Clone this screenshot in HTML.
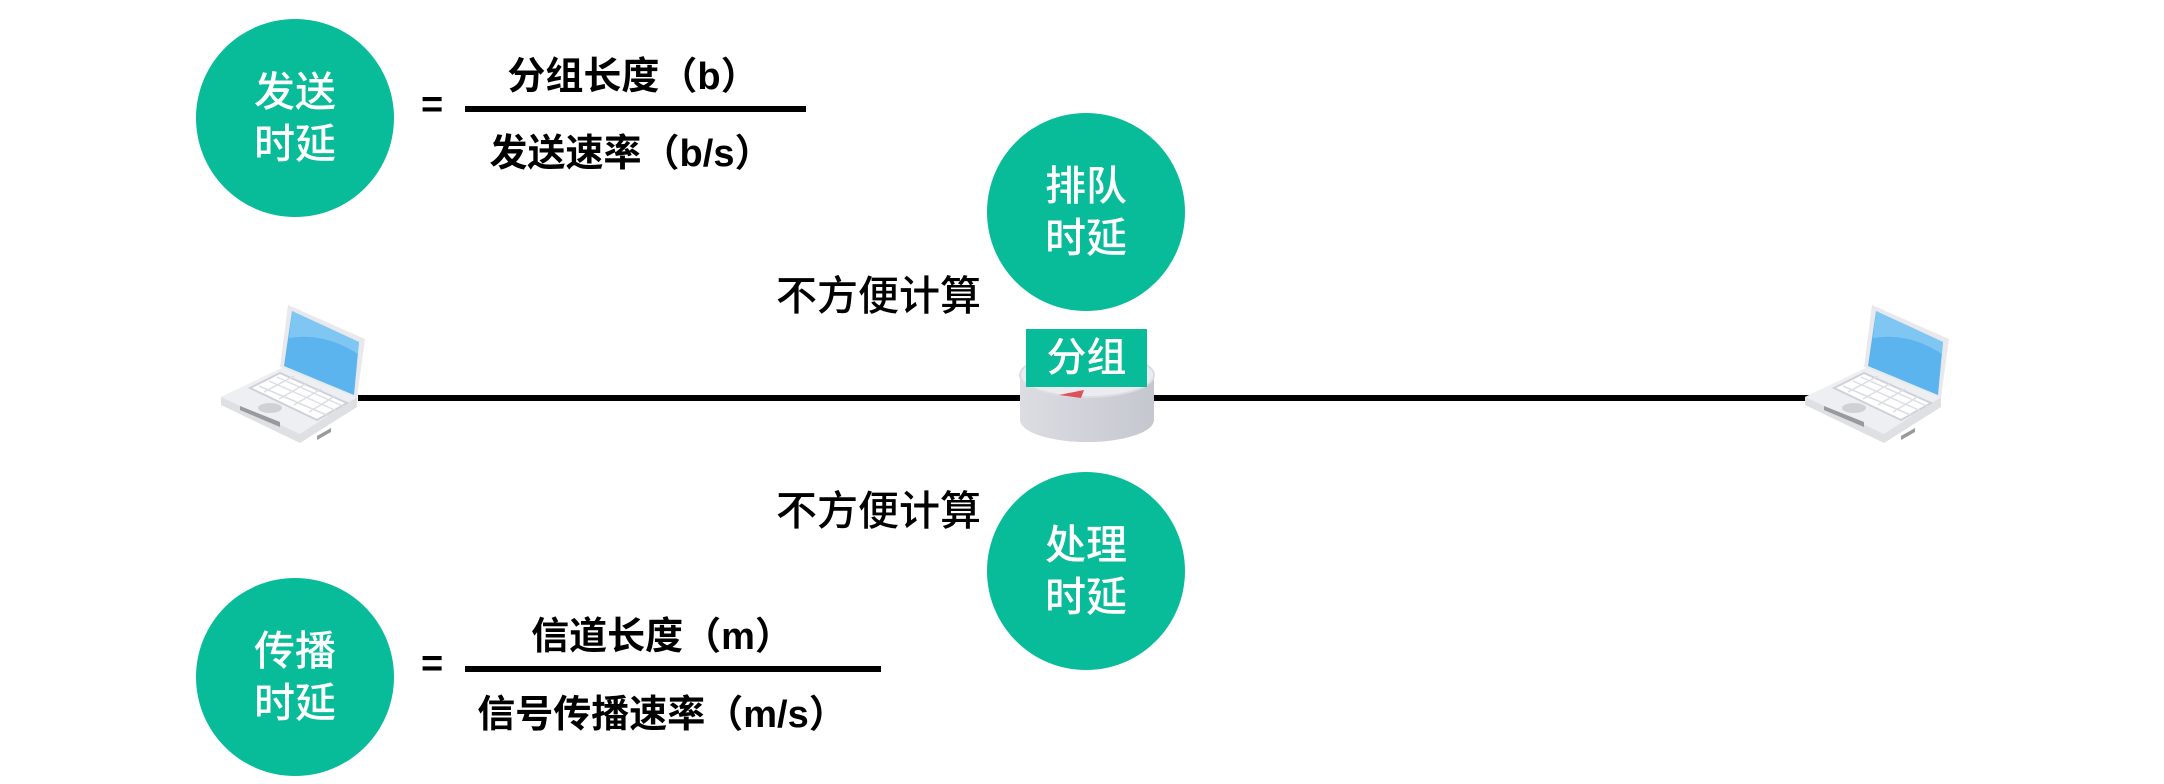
<!DOCTYPE html>
<html><head><meta charset="utf-8"><style>
body{margin:0;width:2164px;height:784px;background:#fff;position:relative;overflow:hidden;font-family:"Liberation Sans","Noto Sans CJK SC",sans-serif}
.c{position:absolute;width:198px;height:198px;border-radius:50%;background:#08bb99;color:#fff;font-size:41px;font-weight:500;line-height:52px;text-align:center;display:flex;align-items:center;justify-content:center}
.t{position:absolute;font-size:38px;font-weight:bold;color:#000;white-space:nowrap;transform:translateX(-50%)}
.bar{position:absolute;background:#000;height:6px}
.eq{position:absolute;font-size:38px;font-weight:bold}
.nb{position:absolute;font-size:41px;font-weight:500;color:#000;white-space:nowrap}
</style></head><body>
<div class="c" style="left:196px;top:19px">发送<br>时延</div>
<div class="c" style="left:987px;top:113px">排队<br>时延</div>
<div class="c" style="left:987px;top:472px">处理<br>时延</div>
<div class="c" style="left:196px;top:578px">传播<br>时延</div>

<div class="eq" style="left:421px;top:84px">=</div>
<div class="t" style="left:633px;top:45px">分组长度（b）</div>
<div class="bar" style="left:465px;top:106px;width:341px"></div>
<div class="t" style="left:631px;top:122px">发送速率（b/s）</div>

<div class="eq" style="left:421px;top:643px">=</div>
<div class="t" style="left:662px;top:605px">信道长度（m）</div>
<div class="bar" style="left:465px;top:666px;width:416px"></div>
<div class="t" style="left:662px;top:683px">信号传播速率（m/s）</div>

<div class="nb" style="left:776px;top:262px">不方便计算</div>
<div class="nb" style="left:776px;top:477px">不方便计算</div>

<div class="bar" style="left:358px;top:395px;width:1452px"></div>

<svg style="position:absolute;left:1019px;top:340px" width="136" height="120" viewBox="0 0 136 120">
<defs><linearGradient id="g" x1="0" x2="1"><stop offset="0" stop-color="#dcdde3"/><stop offset="1" stop-color="#c5c7cf"/></linearGradient></defs>
<path d="M1 35 V80 A67 22 0 0 0 135 80 V35 Z" fill="url(#g)"/>
<ellipse cx="68" cy="35" rx="67" ry="22" fill="#ebecf0" stroke="#dcdde2" stroke-width="2"/>
<path d="M40 55 L65 50 L62 58 Z" fill="#e0505a"/>
</svg>
<div style="position:absolute;left:1026px;top:329px;width:121px;height:58px;background:#08bb99;color:#fff;font-size:40px;font-weight:500;line-height:58px;text-align:center">分组</div>

<svg style="position:absolute;left:219px;top:302px" width="150" height="146" viewBox="0 0 150 146" id="lap">
<path d="M2 95 L63 66 L138 95 L138 105 L81 141 L2 103 Z" fill="#dfe0e4"/>
<path d="M2 95 L63 66 L138 95 L81 132 Z" fill="#eeeff2"/>
<path d="M31 86 L61 71 L128 101 L98 118 Z" fill="#fff" stroke="#cfd1d7" stroke-width="2"/>
<path d="M40 84 L110 114 M50 79 L118 109 M58 75 L124 104 M45 90 L75 74 M60 97 L88 81 M75 103 L102 87 M90 110 L116 94" stroke="#dcdee3" stroke-width="1.5"/>
<path d="M69 3 L146 37 L138 96 L61 65 Z" fill="#e8e9ec"/>
<path d="M73 9 L140 40 L135 93 L65 64 Z" fill="#5cb4ee"/>
<path d="M73 9 L140 40 L139 52 Q105 30 70 36 Z" fill="#90cdf5" opacity=".7"/>
<ellipse cx="51" cy="106" rx="12" ry="5" fill="#cfd1d6"/>
<path d="M21 108 L61 125 L61 120 L21 104Z" fill="#9a9a9e"/>
<path d="M98 134 L112 126 L112 130 L98 138Z" fill="#9a9a9e"/>
</svg>
<svg style="position:absolute;left:1803px;top:302px" width="150" height="146" viewBox="0 0 150 146">
<path d="M2 95 L63 66 L138 95 L138 105 L81 141 L2 103 Z" fill="#dfe0e4"/>
<path d="M2 95 L63 66 L138 95 L81 132 Z" fill="#eeeff2"/>
<path d="M31 86 L61 71 L128 101 L98 118 Z" fill="#fff" stroke="#cfd1d7" stroke-width="2"/>
<path d="M40 84 L110 114 M50 79 L118 109 M58 75 L124 104 M45 90 L75 74 M60 97 L88 81 M75 103 L102 87 M90 110 L116 94" stroke="#dcdee3" stroke-width="1.5"/>
<path d="M69 3 L146 37 L138 96 L61 65 Z" fill="#e8e9ec"/>
<path d="M73 9 L140 40 L135 93 L65 64 Z" fill="#5cb4ee"/>
<path d="M73 9 L140 40 L139 52 Q105 30 70 36 Z" fill="#90cdf5" opacity=".7"/>
<ellipse cx="51" cy="106" rx="12" ry="5" fill="#cfd1d6"/>
<path d="M21 108 L61 125 L61 120 L21 104Z" fill="#9a9a9e"/>
<path d="M98 134 L112 126 L112 130 L98 138Z" fill="#9a9a9e"/>
</svg>
</body></html>
